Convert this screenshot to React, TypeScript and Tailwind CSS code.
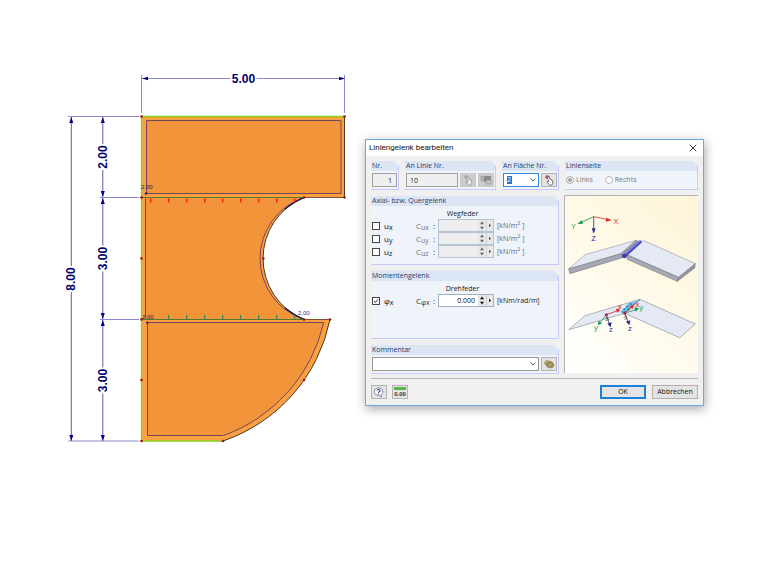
import clsx from "clsx";
import { useState } from "react";
import type { ReactNode } from "react";

const NODES = [
  [141.5, 116.5], [344.5, 116.5], [344.5, 197.5], [141.5, 197.5], [304, 197.5],
  [141.5, 258.5], [263.3, 258.5], [141.5, 319.5], [304, 319.5], [330, 319.5],
  [141.5, 380], [304, 380], [141.5, 441], [223, 441],
];

const TICKS = [151, 169, 187, 205, 223, 241, 259, 277, 295];

type DimProps = {
  x1: number;
  y1: number;
  x2: number;
  y2: number;
  label: string;
};

function Dimension({ x1, y1, x2, y2, label }: DimProps) {
  const vertical = x1 === x2;
  const cx = (x1 + x2) / 2;
  const cy = (y1 + y2) / 2;
  const gap = 13;
  return (
    <g>
      {vertical ? (
        <path
          d={`M${x1} ${y1}V${cy - gap}M${x1} ${cy + gap}V${y2}`}
          stroke="#5c5cae"
        />
      ) : (
        <path
          d={`M${x1} ${y1}H${cx - gap}M${cx + gap} ${y1}H${x2}`}
          stroke="#8a8ac8"
        />
      )}
      {vertical ? (
        <path
          d={`M${x1} ${y1}l-2 6h4zM${x1} ${y2}l-2 -6h4z`}
          fill="#000080"
        />
      ) : (
        <path
          d={`M${x1} ${y1}l6 -1.8v3.6zM${x2} ${y1}l-6 -1.8v3.6z`}
          fill="#000080"
        />
      )}
      <text
        x={cx}
        y={cy + 4}
        textAnchor="middle"
        transform={vertical ? `rotate(-90 ${cx} ${cy})` : undefined}
        className="fill-[#000070] text-[12px] font-bold"
      >
        {label}
      </text>
    </g>
  );
}

function PlateDrawing() {
  return (
    <svg
      viewBox="60 65 290 385"
      className="w-[290px] shrink-0 font-['Liberation_Sans',sans-serif]"
      fill="none"
      role="img"
      aria-label="Plattenmodell"
    >
      {/* extension lines */}
      <path
        d="M141.5 75V113M344.5 75V113M68 116.5H139M100 197.5H139M100 319.5H139M68 441H139"
        stroke="#8a8ac8"
      />
      <Dimension x1={142} y1={78.5} x2={345} y2={78.5} label="5.00" />
      <Dimension x1={102.8} y1={117} x2={102.8} y2={197} label="2.00" />
      <Dimension x1={102.8} y1={198} x2={102.8} y2={319} label="3.00" />
      <Dimension x1={102.8} y1={320} x2={102.8} y2={441} label="3.00" />
      <Dimension x1={71.3} y1={117} x2={71.3} y2={441} label="8.00" />

      {/* surfaces */}
      <path
        d="M141.5 116.5H344.5V197.5H304A65.9 65.9 0 0 0 304 319.5H330A162.6 162.6 0 0 1 223 441H141.5Z"
        fill="#fc9f40"
      />
      <path d="M146 120.5H341V193.5H146Z" fill="#f2943a" />
      <path
        d="M145.5 197.5H304A64.3 64.3 0 0 0 304 319.5H145.5Z"
        fill="#f2943a"
      />
      <path
        d="M147.3 322.7H323.7A157.2 157.2 0 0 1 223.5 435.3H147.3Z"
        fill="#f2943a"
      />

      <g stroke="#74465c">
        <path d="M146.5 120.5H341V193.5H146.5Z" />
        <path d="M145.5 318V198.5" />
        <path d="M304 197.5A64.3 64.3 0 0 0 304 319.5" />
        <path d="M147.5 322.5H323.7A157.2 157.2 0 0 1 223.5 435.5H147.5Z" />
      </g>

      <g stroke="#4a3a28">
        <path d="M344.5 116.5V197.5" />
        <path d="M304 197.5H344.5" stroke="#7d5230" />
        <path d="M304 319.5H330" stroke="#7d5230" />
        <path d="M304 197.5A65.9 65.9 0 0 0 304 319.5" />
        <path d="M330 319.5A162.6 162.6 0 0 1 223 441" />
      </g>
      <path
        d="M304 197.5Q295 201.5 285 209M304 319.5Q295 315.5 285 308"
        stroke="#141450"
        strokeWidth="1.2"
      />
      <path d="M142 197.5H304M142 319.5H304" stroke="#55782a" />
      <path d="M142 116.5H344M142 441H223" stroke="#86d01c" strokeWidth="1.4" />
      <path d="M141.5 116.5V441" stroke="#92d030" strokeWidth="1.4" />

      {TICKS.map((x) => (
        <path key={x} d={`M${x - 0.3} 198.5v4`} stroke="#ff1c10" strokeWidth="1.4" />
      ))}
      {TICKS.slice(1).map((x) => (
        <path key={x} d={`M${x - 0.3} 315v4`} stroke="#2f8468" strokeWidth="1.2" />
      ))}

      {NODES.map(([x, y]) => (
        <circle key={`${x}-${y}`} cx={x} cy={y} r="1.3" fill="#9c1010" />
      ))}
      <circle cx="146" cy="193.5" r="1.2" fill="#20206c" />
      <circle cx="147.3" cy="322.8" r="1.2" fill="#20206c" />

      <g className="text-[6px]">
        <text x="141" y="189" fill="#2c1850">2.00</text>
        <text x="142" y="319" fill="#2c1850">2.00</text>
        <text x="298" y="315" fill="#3030a0">2.00</text>
      </g>
    </svg>
  );
}

function HingePicture() {
  return (
    <svg
      viewBox="15 18 399 531"
      className="block w-full font-['Open_Sans',sans-serif]"
      fill="none"
      role="img"
      aria-label="Liniengelenk"
    >
      <defs>
        <linearGradient id="paper" x1="1" y1="0" x2="0.3" y2="1">
          <stop offset="0" stopColor="#fdf5d8" />
          <stop offset="0.6" stopColor="#fffaea" />
          <stop offset="1" stopColor="#fffefb" />
        </linearGradient>
      </defs>
      <rect x="15" y="18" width="399" height="531" fill="url(#paper)" />

      {/* global axes */}
      <g strokeWidth="2.4">
        <path d="M101 80L64 97" stroke="#0f9a48" />
        <path d="M101 80L140 88" stroke="#e02424" />
        <path d="M101 80V118" stroke="#2c2c8c" />
      </g>
      <path d="M52 102L65 91L69 101Z" fill="#0f9a48" />
      <path d="M155 91L139 83L137 95Z" fill="#e02424" />
      <path d="M101 131L95 115H107Z" fill="#2c2c8c" />
      <g className="text-[24px]">
        <text x="34" y="118" fill="#0f9a48">Y</text>
        <text x="161" y="103" fill="#e02424">X</text>
        <text x="94" y="154" fill="#2c2c8c">Z</text>
      </g>

      {/* folded plate with hinge line */}
      <g strokeLinejoin="round" strokeWidth="1.8">
        <path d="M26 237L75 194L228 151L183 191Z" fill="#e5e9f4" stroke="#8f939c" />
        <path d="M26 237L183 191L187 203L30 251Z" fill="#a6a9b4" stroke="#74777f" />
        <path d="M183 191L228 151L234 154L190 198Z" fill="#9da0aa" stroke="#74777f" />
        <path d="M200 194L250 151L406 221L356 262Z" fill="#e5e9f4" stroke="#8f939c" />
        <path d="M200 194L356 262L352 274L202 208Z" fill="#a6a9b4" stroke="#74777f" />
        <path d="M356 262L406 221L404 234L352 274Z" fill="#92959f" stroke="#74777f" />
      </g>
      <path d="M193 198L240 156" stroke="#4c4cbc" strokeWidth="10" strokeLinecap="round" />
      <path d="M195 193L238 154" stroke="#8484e4" strokeWidth="4" strokeLinecap="round" />
      <circle cx="193" cy="198" r="7" fill="#3c3ca8" />

      {/* local axes on both sides of the hinge */}
      <g strokeLinejoin="round" strokeWidth="2" stroke="#8a8e98">
        <path d="M26 419L75 377L240 328L194 370Z" fill="#e5e9f4" />
        <path d="M194 370L240 328L406 402L359 443Z" fill="#e5e9f4" />
      </g>
      <path d="M182 366L206 340L240 329L194 370Z" fill="#75c5ec" />
      <path
        d="M184 366h6M190 358h6M199 350h7M208 342h7M192 366h6M202 358h6M213 350h6"
        stroke="#1687c4"
        strokeWidth="5"
      />
      <path d="M194 370L240 328" stroke="#4b5566" strokeWidth="2" />
      <g strokeWidth="2.4">
        <path d="M139 374L170 363M194 370L216 350" stroke="#e02424" />
        <path d="M139 374L122 396M194 370L226 359" stroke="#0f9a48" />
        <path d="M139 374L148 402M194 370L205 398" stroke="#2c2c8c" />
      </g>
      <path d="M182 359L168 356L171 368ZM223 343L209 349L217 358Z" fill="#e02424" />
      <path d="M113 406L116 392L126 400ZM237 355L223 352L227 365Z" fill="#0f9a48" />
      <path d="M152 412L142 401L155 396ZM208 406L198 395L211 391Z" fill="#2c2c8c" />
      <path d="M135 386l10 -4M137 392l10 -4M191 382l10 -4M193 388l10 -4" stroke="#333" strokeWidth="2" />
      <circle cx="139" cy="374" r="4.5" fill="#a81858" />
      <circle cx="194" cy="370" r="4.5" fill="#a81858" />
      <g className="text-[24px]">
        <text x="173" y="356" fill="#e02424">x</text>
        <text x="226" y="350" fill="#e02424">x</text>
        <text x="102" y="419" fill="#0f9a48">y</text>
        <text x="238" y="359" fill="#0f9a48">y</text>
        <text x="147" y="425" fill="#2c2c8c">z</text>
        <text x="204" y="422" fill="#2c2c8c">z</text>
      </g>
    </svg>
  );
}

type GroupProps = {
  title: string;
  className?: string;
  children: ReactNode;
};

function Group({ title, className, children }: GroupProps) {
  return (
    <section
      className={clsx(
        "border-r border-b border-[#c9c9fb] bg-[#eff3fa] [clip-path:polygon(0_0,calc(100%-5px)_0,100%_5px,100%_100%,0_100%)]",
        className
      )}
    >
      <h2 className="h-[10px] bg-[#dce5f4] pl-px leading-[10px] whitespace-nowrap text-[#24406e]">
        {title}
      </h2>
      {children}
    </section>
  );
}

type IconButtonProps = {
  label: string;
  disabled?: boolean;
  children: ReactNode;
};

function IconButton({ label, disabled, children }: IconButtonProps) {
  return (
    <button
      aria-label={label}
      disabled={disabled}
      className={clsx(
        "flex h-[14px] w-4 shrink-0 items-center justify-center border",
        disabled ? "border-[#c8c8c8] bg-[#cccccc]" : "border-[#b4b4b4] bg-[#e3e3e3]"
      )}
    >
      {children}
    </button>
  );
}

function PickIcon({ muted }: { muted?: boolean }) {
  return (
    <svg viewBox="0 0 14 12" className="h-3 w-[14px]" fill="none">
      <path
        d="M3 3.2H8M5.2 1V5"
        stroke={muted ? "#a4a4a4" : "#e02828"}
        strokeWidth="1.3"
      />
      <path
        d="M5 2.4L6.2 2L8 5L10 5.8L11 9L9.6 11.2H7.6L5 8L5.8 7L6.8 7.6Z"
        fill={muted ? "#e6e6e6" : "#ffffff"}
        stroke={muted ? "#888888" : "#444444"}
        strokeWidth="0.7"
      />
    </svg>
  );
}

function Chevron() {
  return (
    <svg
      viewBox="0 0 6 4"
      className="pointer-events-none absolute top-1/2 right-[3px] h-1 w-[6px] -translate-y-1/2"
      fill="none"
    >
      <path d="M0.5 0.5L3 3L5.5 0.5" stroke="#505050" strokeWidth="0.9" />
    </svg>
  );
}

type SpringRowProps = {
  symbol: string;
  axis: string;
  coefficient: string;
  unit: ReactNode;
  initialChecked?: boolean;
  initialValue?: string;
};

function SpringRow({
  symbol,
  axis,
  coefficient,
  unit,
  initialChecked = false,
  initialValue = "",
}: SpringRowProps) {
  const [checked, setChecked] = useState(initialChecked);
  const [value, setValue] = useState(initialValue);

  return (
    <div className="flex h-[13px] items-center pl-px whitespace-nowrap">
      <label className="relative flex w-11 items-center gap-1 text-[8px] leading-3 text-[#111]">
        <input
          type="checkbox"
          checked={checked}
          onChange={(e) => setChecked(e.target.checked)}
          className="size-2 appearance-none border border-[#444] bg-white"
        />
        {checked && (
          <svg
            viewBox="0 0 8 8"
            className="pointer-events-none absolute top-1/2 left-0 size-2 -translate-y-1/2"
            fill="none"
          >
            <path d="M2 4L3.4 5.5L6 2.3" stroke="#222" strokeWidth="0.9" />
          </svg>
        )}
        <span>
          {symbol}
          <sub className="text-[7px]">{axis}</sub>
        </span>
      </label>
      <span
        className={clsx(
          "flex w-[22px] justify-between pr-[3px] text-[8px] leading-3",
          checked ? "text-[#333]" : "text-[#777]"
        )}
      >
        <span>
          C<sub className="text-[7px]">{coefficient}</sub>
        </span>
        <span className="text-[#222]">:</span>
      </span>
      <span
        className={clsx(
          "flex h-[13px] w-14 border",
          checked ? "border-[#9fb2c4] bg-white" : "border-[#b5c4d2] bg-[#eeeeee]"
        )}
      >
        <input
          aria-label={`C${coefficient}`}
          value={value}
          disabled={!checked}
          onChange={(e) => setValue(e.target.value)}
          className="w-0 flex-1 pr-[3px] text-right text-[#111]"
        />
        <button
          aria-label="Wert ändern"
          disabled={!checked}
          className="flex w-2 items-center justify-center bg-[#e6e6e6]"
        >
          <svg viewBox="0 0 6 9" className="h-[9px] w-[6px]">
            <path d="M3 0.5L5 3.2H1ZM3 8.5L5 5.8H1Z" fill={checked ? "#111" : "#666"} />
          </svg>
        </button>
        <button
          aria-label="Auswahl"
          disabled={!checked}
          className="flex w-[7px] items-center justify-center border-l border-[#cfcfcf] bg-[#e9e9e9]"
        >
          <svg viewBox="0 0 4 5" className="h-[5px] w-1">
            <path d="M1 0.8L3.2 2.5L1 4.2Z" fill={checked ? "#111" : "#555"} />
          </svg>
        </button>
      </span>
      <span className={clsx("pl-[3px]", checked ? "text-[#222]" : "text-[#666]")}>
        {unit}
      </span>
    </div>
  );
}

function HingeDialog() {
  const [surface, setSurface] = useState("2");
  const [comment, setComment] = useState("");

  const kiloNewton = (
    <>
      [kN/m<sup>2</sup> ]
    </>
  );

  return (
    <div
      role="dialog"
      aria-label="Liniengelenk bearbeiten"
      className="mt-[74px] min-w-0 flex-1 border border-[#6ba7e0] bg-[#f0f0f0] text-[7px] leading-[10px] text-[#222] shadow-[1px_3px_10px_rgba(0,0,0,0.35)]"
    >
      <header className="flex h-4 items-center justify-between bg-white pr-[6px] pl-[3px]">
        <h1 className="font-['Roboto',sans-serif] text-[8px] text-[#111]">
          Liniengelenk bearbeiten
        </h1>
        <button aria-label="Schließen">
          <svg viewBox="0 0 8 8" className="size-2" fill="none">
            <path d="M0.8 0.8L7.2 7.2M7.2 0.8L0.8 7.2" stroke="#222" strokeWidth="0.9" />
          </svg>
        </button>
      </header>

      <div className="flex gap-[6px] px-[5px] pt-[5px]">
        <div className="flex w-[188px] shrink-0 flex-col gap-[6px]">
          <div className="flex gap-[6px]">
            <Group title="Nr." className="h-[29px] w-7">
              <div className="flex px-px pt-[2px]">
                <input
                  aria-label="Nr."
                  value="1"
                  readOnly
                  className="h-[14px] w-full border border-[#a0a0a0] bg-[#efefef] pr-1 text-right"
                />
              </div>
            </Group>
            <Group title="An Linie Nr." className="h-[29px] flex-1">
              <div className="flex gap-[2px] px-px pt-[2px]">
                <input
                  aria-label="An Linie Nr."
                  value="10"
                  readOnly
                  className="h-[14px] w-0 flex-1 border border-[#a0a0a0] bg-[#efefef] pl-[3px]"
                />
                <IconButton label="Linie wählen" disabled>
                  <PickIcon muted />
                </IconButton>
                <IconButton label="Mehrere Linien" disabled>
                  <svg viewBox="0 0 12 10" className="h-[10px] w-3">
                    <path d="M1 1H5V6H1Z" fill="#b2b2b2" stroke="#9a9a9a" strokeWidth="0.6" />
                    <path d="M4 1H11V7H4Z" fill="#8c8c8c" />
                    <path d="M6 5H11V9H6Z" fill="#c4c4c4" stroke="#8a8a8a" strokeWidth="0.6" />
                  </svg>
                </IconButton>
              </div>
            </Group>
            <Group title="An Fläche Nr." className="h-[29px] w-[57px]">
              <div className="flex gap-[2px] px-px pt-[2px]">
                <div className="relative flex-1">
                  <select
                    aria-label="An Fläche Nr."
                    value={surface}
                    onChange={(e) => setSurface(e.target.value)}
                    className="block h-[14px] w-full appearance-none border border-[#2e8ade] bg-white bg-[linear-gradient(#1a78d4,#1a78d4)] bg-[length:5px_8px] bg-[position:3px_2px] bg-no-repeat pl-[3px] text-white"
                  >
                    <option>1</option>
                    <option>2</option>
                    <option>3</option>
                  </select>
                  <Chevron />
                </div>
                <IconButton label="Fläche wählen">
                  <PickIcon />
                </IconButton>
              </div>
            </Group>
          </div>

          <Group title="Axial- bzw. Quergelenk" className="h-[69px]">
            <p className="pt-[3px] pr-1 text-center">Wegfeder</p>
            <SpringRow symbol="u" axis="x" coefficient="ux" unit={kiloNewton} />
            <SpringRow symbol="u" axis="y" coefficient="uy" unit={kiloNewton} />
            <SpringRow symbol="u" axis="z" coefficient="uz" unit={kiloNewton} />
          </Group>

          <Group title="Momentengelenk" className="h-[68px]">
            <p className="pt-[3px] pr-1 text-center">Drehfeder</p>
            <SpringRow
              symbol="φ"
              axis="x"
              coefficient="φx"
              unit="[kNm/rad/m]"
              initialChecked
              initialValue="0.000"
            />
          </Group>

          <Group title="Kommentar" className="h-[29px]">
            <div className="flex gap-[2px] px-px pt-[2px]">
              <div className="relative flex-1">
                <select
                  aria-label="Kommentar"
                  value={comment}
                  onChange={(e) => setComment(e.target.value)}
                  className="block h-[14px] w-full appearance-none border border-[#969696] bg-white pl-[3px]"
                >
                  <option value=""></option>
                </select>
                <Chevron />
              </div>
              <IconButton label="Kommentar übernehmen">
                <svg viewBox="0 0 12 10" className="h-[10px] w-3" strokeWidth="0.5" stroke="#6e6434">
                  <path d="M1 4L3 1.5L8 2.5L10 5L8 7L3 6Z" fill="#c9bc82" />
                  <path d="M3 5L5 2.8L10 4L11 6.5L9 9L4 8Z" fill="#a3965a" />
                  <path d="M4.5 5.5L6 4L9.5 5L8.5 7Z" fill="#c9bc82" />
                </svg>
              </IconButton>
            </div>
          </Group>
        </div>

        <div className="flex min-w-0 flex-1 flex-col gap-[5px]">
          <Group title="Linienseite" className="h-[29px]">
            <div className="flex gap-3 pt-1 pl-px text-[#777]">
              {["Links", "Rechts"].map((side) => (
                <label key={side} className="flex items-center gap-[2px]">
                  <input
                    type="radio"
                    name="side"
                    defaultChecked={side === "Links"}
                    disabled
                    className="size-2 appearance-none rounded-full border border-[#b8b8b8] bg-white checked:bg-[#a0a0a0] checked:shadow-[inset_0_0_0_1px_#fff]"
                  />
                  {side}
                </label>
              ))}
            </div>
          </Group>
          <div className="-ml-px border-t border-l border-[#b4b4b4]">
            <HingePicture />
          </div>
        </div>
      </div>

      <footer className="mx-[5px] mt-1 flex items-center border-t border-[#b4b4b4] pt-[6px] pb-[6px]">
        <div className="flex flex-1 gap-[5px]">
          <IconButton label="Hilfe">
            <svg viewBox="0 0 12 11" className="h-[11px] w-3" fill="none">
              <path
                d="M5.6 1A4.2 3.6 0 1 0 5.6 8.2L8.6 10L8 7.6A4.2 3.6 0 0 0 5.6 1Z"
                fill="#fff"
                stroke="#6a7488"
                strokeWidth="0.8"
              />
              <path
                d="M4 3.6C4.2 2.2 7.2 2.2 7 3.8C6.9 4.8 5.6 4.7 5.5 5.8M5.5 6.6V7.5"
                stroke="#2c4480"
                strokeWidth="1.1"
              />
            </svg>
          </IconButton>
          <button
            aria-label="Einheiten und Dezimalstellen"
            className="flex h-[14px] w-4 flex-col items-center border border-[#b4b4b4] bg-[#e6e6e6] pt-px"
          >
            <span className="h-[3px] w-3 bg-[#55b54c]" />
            <span className="font-['Liberation_Sans',sans-serif] text-[6px] leading-[8px] font-bold text-[#333]">
              0.00
            </span>
          </button>
        </div>
        <div className="flex gap-[6px]">
          <button className="h-[14px] w-[46px] border-2 border-[#1a80d8] bg-[#e3e3e3] leading-[10px] text-[#111]">
            OK
          </button>
          <button className="h-[14px] w-[46px] border border-[#b0b0b0] bg-[#e3e3e3] leading-3 text-[#111]">
            Abbrechen
          </button>
        </div>
      </footer>
    </div>
  );
}

export default function App() {
  return (
    <main className="flex min-h-screen items-start gap-[15px] bg-white pt-[65px] pr-14 pl-[60px] font-['Open_Sans',sans-serif]">
      <PlateDrawing />
      <HingeDialog />
    </main>
  );
}
